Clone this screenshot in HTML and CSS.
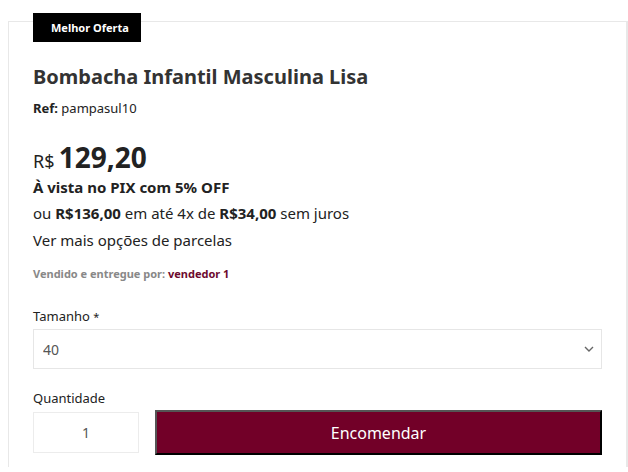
FILE: index.html
```html
<!DOCTYPE html>
<html lang="pt-BR">
<head>
    <meta charset="UTF-8">
    <meta name="viewport" content="width=device-width, initial-scale=1.0">
    <title>Bombacha Infantil Masculina Lisa</title>
    <link rel="stylesheet" href="styles.css">
</head>
<body>
    <div class="product-box">
        <span class="badge">Melhor Oferta</span>

        <h1 class="product-name">Bombacha Infantil Masculina Lisa</h1>
        <p class="product-ref"><b>Ref:</b> pampasul10</p>

        <div class="price">
            <span class="currency">R$</span>
            <span class="value">129,20</span>
        </div>
        <p class="pix">À vista no PIX com 5% OFF</p>
        <p class="installments">ou <b>R$136,00</b> em até 4x de <b>R$34,00</b> sem juros</p>
        <a class="more-options" href="#">Ver mais opções de parcelas</a>

        <p class="seller">Vendido e entregue por: <a href="#">vendedor 1</a></p>

        <label class="field-label" for="size">Tamanho <span class="req">*</span></label>
        <div class="select-wrap">
            <select id="size" class="size-select">
                <option>40</option>
            </select>
            <svg class="chevron" width="10" height="6" viewBox="0 0 10 6">
                <path d="M1 1l4 4 4-4" fill="none" stroke="#666" stroke-width="1.4"/>
            </svg>
        </div>

        <label class="field-label qty-label" for="qty">Quantidade</label>
        <div class="buy-row">
            <input id="qty" class="qty" type="text" value="1">
            <button class="buy-btn">Encomendar</button>
        </div>
    </div>
</body>
</html>
```

FILE: styles.css
```css
body {
    margin: 0;
    padding: 21px 0 0 8px;
    background: #fff;
    color: #333;
    font-family: 'Noto Sans', 'Open Sans', sans-serif;
}

.product-box {
    position: relative;
    border: 1px solid #e8e8e8;
    border-right-width: 2px;
    border-bottom: none;
    padding: 40px 23px 12px 24px;
}

.badge {
    position: absolute;
    top: -9px;
    left: 24px;
    background: #000;
    color: #fff;
    font-size: 11px;
    font-weight: bold;
    padding: 0 12px 0 18px;
    height: 29px;
    line-height: 29px;
    white-space: nowrap;
}

.product-name {
    margin: 0;
    font-size: 20px;
    line-height: 30px;
    color: #333;
}

.product-ref {
    margin: 7px 0 0;
    font-size: 13px;
    line-height: 18px;
    color: #222;
}

.price {
    margin-top: 24px;
    color: #222;
    line-height: 32px;
}

.currency {
    font-size: 18px;
}

.value {
    font-size: 28px;
    font-weight: bold;
}

.pix {
    margin: -2px 0 0;
    font-size: 15px;
    font-weight: bold;
    line-height: 22px;
    color: #222;
}

.installments {
    margin: 4px 0 0;
    font-size: 15px;
    line-height: 22px;
    color: #222;
}

.more-options {
    display: block;
    margin-top: 5px;
    font-size: 15px;
    line-height: 22px;
    color: #222;
    text-decoration: none;
}

.seller {
    margin: 15px 0 0;
    font-size: 11px;
    font-weight: bold;
    line-height: 16px;
    color: #888;
}

.seller a {
    color: #6d0a2e;
    text-decoration: none;
}

.field-label {
    display: block;
    margin-top: 25px;
    font-size: 13px;
    line-height: 18px;
    color: #222;
}

.req {
    font-size: 11px;
}

.select-wrap {
    position: relative;
    margin-top: 3px;
    margin-right: 1px;
}

.size-select {
    display: block;
    width: 100%;
    height: 40px;
    border: 1px solid #e6e6e6;
    background: #fff;
    padding: 0 9px;
    font-family: inherit;
    font-size: 14px;
    color: #555;
    appearance: none;
    border-radius: 0;
}

.chevron {
    position: absolute;
    right: 8px;
    top: 17px;
}

.qty-label {
    margin-top: 20px;
}

.buy-row {
    display: flex;
    align-items: flex-start;
    gap: 16px;
    margin-top: 3px;
    margin-right: 1px;
}

.qty {
    box-sizing: border-box;
    width: 106px;
    height: 41px;
    margin-top: 2px;
    border: 1px solid #ececec;
    text-align: center;
    font-family: inherit;
    font-size: 14px;
    color: #555;
    outline: none;
}

.buy-btn {
    flex: 1;
    height: 45px;
    background: #720028;
    color: #fff;
    font-family: inherit;
    font-size: 16px;
    border: 2px solid;
    border-color: #555 #000 #000 #555;
    cursor: pointer;
}
```
